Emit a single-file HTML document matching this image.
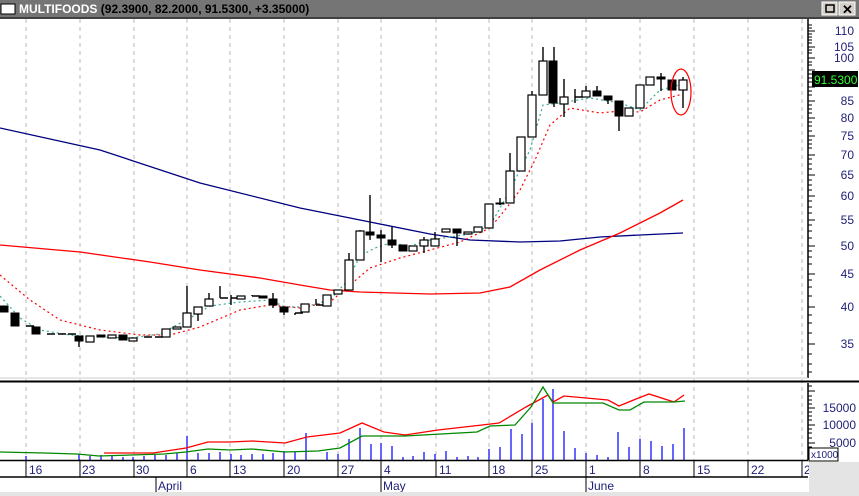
<!DOCTYPE html>
<html><head><meta charset="utf-8"><style>
html,body{margin:0;padding:0;background:#fff;width:859px;height:496px;overflow:hidden;font-family:"Liberation Sans",Arial,sans-serif}
</style></head><body>
<svg width="859" height="496" viewBox="0 0 859 496" xmlns="http://www.w3.org/2000/svg" font-family="Liberation Sans, Arial, sans-serif">
<rect width="859" height="496" fill="#fff"/>
<rect x="0" y="0" width="859" height="17" fill="#757575"/>
<rect x="1" y="4" width="14" height="10" fill="#fff" stroke="#000" stroke-width="1"/>
<text x="19" y="13" font-size="12" font-weight="bold" fill="#fff">MULTIFOODS <tspan fill="#000">(92.3900, 82.2000, 91.5300, +3.35000)</tspan></text>
<rect x="822" y="2" width="15" height="13" fill="#d4d0c8" stroke="#fff"/>
<rect x="826" y="5" width="8" height="7" fill="none" stroke="#000" stroke-width="1.5"/>
<rect x="839" y="2" width="16" height="13" fill="#d4d0c8" stroke="#fff"/>
<text x="842" y="14" font-size="13" font-weight="bold" fill="#000">✕</text>
<line x1="0" y1="18" x2="859" y2="18" stroke="#000" stroke-width="1.5"/>
<g stroke="#bbb" stroke-dasharray="4,4" stroke-width="1">
<path d="M26 19V460M80 19V460M134 19V460M187 19V460M230 19V460M284 19V460M338 19V460M381 19V460M436 19V460M489 19V460M532 19V460M586 19V460M640 19V460M694 19V460M748 19V460M802 19V460"/>
</g>
<polyline fill="none" stroke="#000080" stroke-width="1.3" points="0,128 100,150 200,183 300,208 370,222 430,234 470,240 520,242 560,241 600,237 640,235 683,233"/>
<polyline fill="none" stroke="#f00" stroke-width="1.3" points="0,245 80,252 150,262 200,270 260,278 300,285 330,290 360,292 430,294 480,293 510,287 540,270 580,250 620,233 660,213 683,200"/>
<polyline fill="none" stroke="#f00" stroke-width="1.2" stroke-dasharray="2,3" points="0,275 30,300 60,320 100,330 140,335 170,335 200,327 240,310 270,305 300,308 330,302 350,285 370,268 400,258 430,250 460,242 490,228 505,210 520,190 535,160 550,125 570,108 600,113 620,111 640,112 660,100 683,94"/>
<polyline fill="none" stroke="#3a9" stroke-width="1.2" stroke-dasharray="2,3" points="0,296 20,318 40,330 70,335 100,337 130,338 160,334 190,318 210,306 240,302 270,300 285,307 305,307 330,300 348,280 360,256 375,248 390,243 410,246 430,240 470,234 490,226 510,190 530,150 543,105 560,103 590,98 620,103 640,110 650,100 660,90 683,84"/>
<g stroke="#000" stroke-width="1.4">
<path d="M79 336V347M187 286V313M198 314V321M209 293V299M220 286V298M231 295V305M252 295V296M273 293V308M284 312V315M295 313V315M316 299V305M349 253V260M360 230V231M370 195V240M381 230V262M392 227V248M424 237V253M435 232V239M457 229V246M489 204V228M500 198V205M510 153V171M532 91V95M543 47V61M554 47V107M564 79V117M575 89V103M586 86V91M597 86V91M608 96V104M619 101V131M650 77V85M661 73V91M683 77V108"/>
<path d="M26 326H34M47 334H55M58 334H66M68 334H76M144 337H152M155 337H163M220 298H228M231 298H239M252 296H260M295 313H303M316 305H324M575 97H583"/>
</g>
<g fill="#000" stroke="#000" stroke-width="1">
<rect x="0" y="306" width="8" height="6"/><rect x="11" y="313" width="8" height="13"/><rect x="32" y="327" width="8" height="7"/><rect x="75" y="336" width="8" height="5"/><rect x="97" y="335" width="8" height="2"/><rect x="119" y="335" width="8" height="5"/><rect x="259" y="296" width="8" height="2"/><rect x="269" y="299" width="8" height="6"/><rect x="280" y="307" width="8" height="5"/><rect x="366" y="232" width="8" height="3"/><rect x="377" y="235" width="8" height="3"/><rect x="388" y="240" width="8" height="5"/><rect x="399" y="245" width="8" height="6"/><rect x="453" y="229" width="8" height="4"/><rect x="496" y="203" width="8" height="1"/><rect x="549" y="61" width="8" height="42"/><rect x="593" y="91" width="8" height="5"/><rect x="604" y="96" width="8" height="4"/><rect x="615" y="101" width="8" height="15"/><rect x="657" y="77" width="8" height="2"/><rect x="668" y="80" width="8" height="10"/>
</g>
<g fill="#fff" stroke="#000" stroke-width="1.2">
<rect x="86" y="336" width="8" height="6"/><rect x="108" y="335" width="8" height="3"/><rect x="129" y="338" width="8" height="3"/><rect x="162" y="329" width="8" height="8"/><rect x="173" y="327" width="8" height="2"/><rect x="183" y="313" width="8" height="14"/><rect x="194" y="307" width="8" height="7"/><rect x="205" y="299" width="8" height="7"/><rect x="237" y="296" width="8" height="3"/><rect x="301" y="304" width="8" height="8"/><rect x="323" y="295" width="8" height="11"/><rect x="334" y="290" width="8" height="4"/><rect x="345" y="260" width="8" height="30"/><rect x="356" y="231" width="8" height="29"/><rect x="409" y="246" width="8" height="5"/><rect x="420" y="240" width="8" height="6"/><rect x="431" y="239" width="8" height="7"/><rect x="442" y="229" width="8" height="3"/><rect x="464" y="232" width="8" height="2"/><rect x="474" y="227" width="8" height="5"/><rect x="485" y="204" width="8" height="24"/><rect x="506" y="171" width="8" height="32"/><rect x="517" y="137" width="8" height="34"/><rect x="528" y="95" width="8" height="42"/><rect x="539" y="61" width="8" height="34"/><rect x="560" y="97" width="8" height="7"/><rect x="582" y="91" width="8" height="6"/><rect x="625" y="108" width="8" height="8"/><rect x="636" y="85" width="8" height="23"/><rect x="646" y="77" width="8" height="8"/><rect x="679" y="80" width="8" height="10"/>
</g>
<ellipse cx="681" cy="92" rx="10" ry="23" fill="none" stroke="#f00" stroke-width="1.2"/>
<line x1="808" y1="19" x2="808" y2="378" stroke="#000" stroke-width="1.5"/>
<g stroke="#000" stroke-width="1">
<path d="M808 31h7M808 47h7M808 58h7M808 70h7M808 87h7M808 101h7M808 118h7M808 136h7M808 155h7M808 175h7M808 196h7M808 220h7M808 246h7M808 274h7M808 307h7M808 344h7"/>
<path d="M808 25h4M808 28h4M808 34h4M808 37h4M808 40h4M808 43h4M808 50h4M808 53h4M808 62h4M808 65h4M808 74h4M808 78h4M808 82h4M808 91h4M808 95h4M808 105h4M808 109h4M808 113h4M808 122h4M808 126h4M808 131h4M808 140h4M808 144h4M808 148h4M808 159h4M808 164h4M808 169h4M808 180h4M808 185h4M808 190h4M808 201h4M808 207h4M808 213h4M808 225h4M808 231h4M808 238h4M808 251h4M808 257h4M808 264h4M808 280h4M808 287h4M808 296h4M808 315h4M808 323h4M808 333h4M808 354h4M808 364h4M808 372h4"/>
</g>
<g font-size="12" fill="#20207a" text-anchor="end">
<text x="854" y="35">110</text><text x="854" y="51">105</text><text x="854" y="62">100</text><text x="854" y="105">85</text><text x="854" y="122">80</text><text x="854" y="140">75</text><text x="854" y="159">70</text><text x="854" y="179">65</text><text x="854" y="200">60</text><text x="854" y="224">55</text><text x="854" y="250">50</text><text x="854" y="278">45</text><text x="854" y="311">40</text><text x="854" y="348">35</text>
</g>
<rect x="812" y="71" width="46" height="16" fill="#000"/>
<text x="814" y="84" font-size="12" fill="#3f3">91.5300</text>
<line x1="0" y1="378" x2="808" y2="378" stroke="#ccc"/>
<line x1="0" y1="381.5" x2="859" y2="381.5" stroke="#000" stroke-width="2"/>
<g stroke="#00f" stroke-width="1.2">
<path d="M26 460V456M79 460V454M90 460V456M101 460V455M112 460V456M123 460V457M133 460V457M144 460V456M155 460V455M166 460V455M177 460V453M187 460V436M198 460V453M209 460V453M220 460V452M231 460V454M241 460V455M252 460V454M263 460V454M273 460V453M284 460V451M295 460V452M306 460V433M327 460V452M338 460V454M349 460V439M360 460V428M371 460V444M381 460V443M392 460V446M403 460V457M413 460V456M424 460V452M435 460V454M446 460V451M457 460V457M468 460V456M478 460V457M489 460V449M500 460V447M511 460V429M522 460V434M532 460V423M543 460V399M553 460V389M564 460V431M575 460V448M586 460V453M597 460V455M608 460V457M618 460V432M629 460V447M640 460V439M651 460V441M662 460V446M673 460V444M684 460V428"/>
</g>
<polyline fill="none" stroke="#f00" stroke-width="1.3" points="104,453 153,453 186,448 208,442 230,442 252,441 285,443 307,437 340,433 362,423 384,432 405,435 438,430 482,425 499,423 526,407 548,395 553,402 564,396 586,398 608,400 619,406 636,399 649,394 674,402 684,395"/>
<polyline fill="none" stroke="#080" stroke-width="1.3" points="0,452 44,453 77,454 99,456 164,454 186,452 208,449 230,450 252,449 285,452 318,451 340,448 362,436 405,436 477,432 490,426 515,425 531,407 543,387 553,403 603,403 619,410 630,410 644,402 674,402 685,401"/>
<line x1="808" y1="383" x2="808" y2="460" stroke="#000" stroke-width="1.5"/>
<g stroke="#000"><path d="M808 391h7M808 408h7M808 425h7M808 443h7M808 386h4M808 396h4M808 400h4M808 404h4M808 412h4M808 416h4M808 420h4M808 429h4M808 433h4M808 438h4M808 447h4M808 451h4"/></g>
<g font-size="12" fill="#20207a" text-anchor="end"><text x="856" y="412">15000</text><text x="856" y="429">10000</text><text x="856" y="447">5000</text></g>
<rect x="809" y="448" width="29" height="13" fill="#fff" stroke="#000"/>
<text x="811" y="458" font-size="10" fill="#20207a">x1000</text>
<line x1="0" y1="460.5" x2="808" y2="460.5" stroke="#000" stroke-width="1.5"/>
<line x1="0" y1="477" x2="808" y2="477" stroke="#000" stroke-width="1.5"/>
<g stroke="#000"><path d="M26 461V477M80 461V477M134 461V477M187 461V477M230 461V477M284 461V477M338 461V477M381 461V477M436 461V477M489 461V477M532 461V477M586 461V477M640 461V477M694 461V477M748 461V477M802 461V477M156 477V492M381 477V492M586 477V492"/></g>
<g font-size="12" fill="#20207a">
<text x="29" y="474">16</text><text x="82" y="474">23</text><text x="136" y="474">30</text><text x="190" y="474">6</text><text x="233" y="474">13</text><text x="287" y="474">20</text><text x="341" y="474">27</text><text x="384" y="474">4</text><text x="439" y="474">11</text><text x="492" y="474">18</text><text x="535" y="474">25</text><text x="589" y="474">1</text><text x="643" y="474">8</text><text x="697" y="474">15</text><text x="751" y="474">22</text><text x="804" y="474">2</text>
<text x="158" y="490">April</text><text x="383" y="490">May</text><text x="588" y="490">June</text>
</g>
<rect x="809" y="462" width="50" height="34" fill="#e4e4e4"/>
<rect x="0" y="492" width="809" height="4" fill="#e4e4e4"/>
</svg>
</body></html>
